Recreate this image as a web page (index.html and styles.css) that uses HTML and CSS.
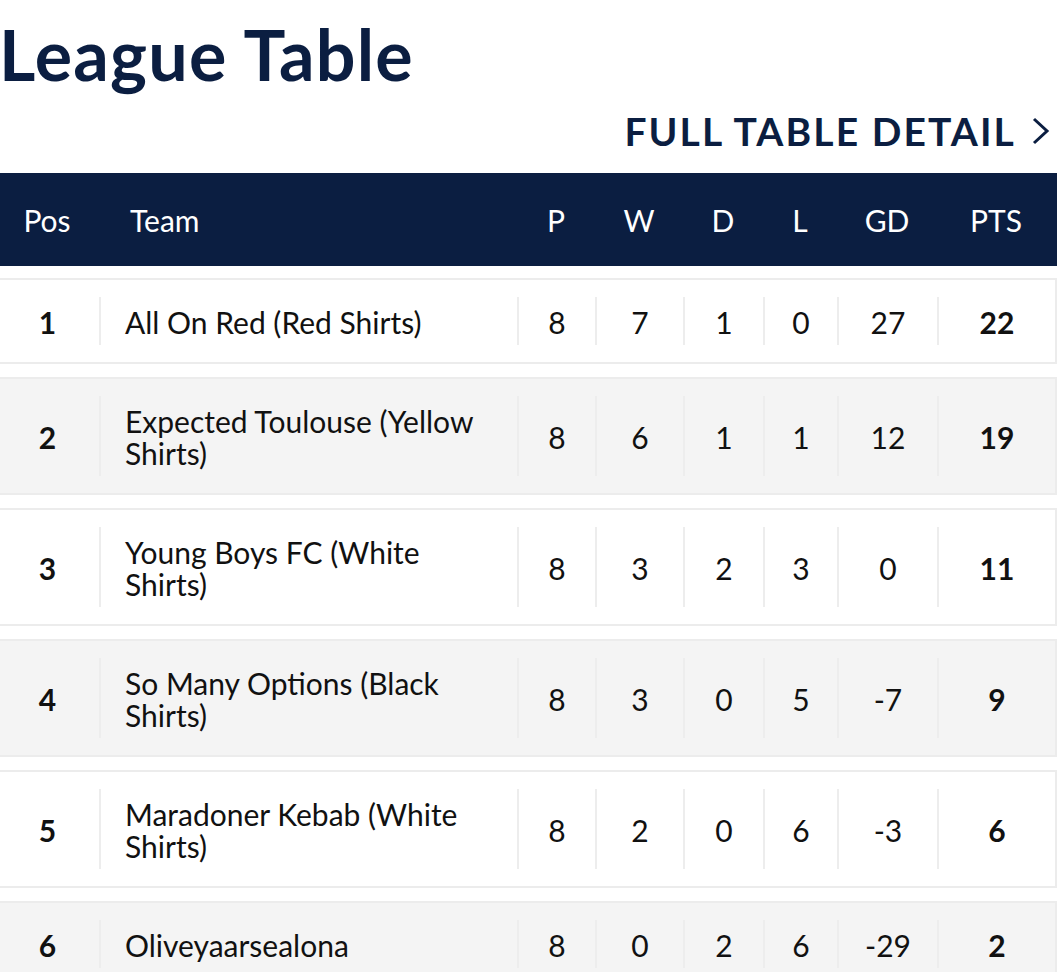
FILE: index.html
```html
<!DOCTYPE html>
<html lang="en">
<head>
<meta charset="utf-8">
<title>League Table</title>
<link rel="stylesheet" href="styles.css">
</head>
<body>
<main class="page">
  <h1 class="title">League Table</h1>
  <div class="more-row">
    <a class="more-link" href="#">FULL TABLE DETAIL
      <svg class="chevron" width="18" height="28" viewBox="0 0 18 28" aria-hidden="true"><polyline points="2,2 15,14 2,26" fill="none" stroke="currentColor" stroke-width="3"/></svg>
    </a>
  </div>
  <section class="table">
    <div class="head">
      <div class="hc pos">Pos</div>
      <div class="hc team">Team</div>
      <div class="hc">P</div>
      <div class="hc">W</div>
      <div class="hc">D</div>
      <div class="hc">L</div>
      <div class="hc">GD</div>
      <div class="hc">PTS</div>
    </div>

    <div class="row">
      <div class="c pos b">1</div>
      <div class="c team">All On Red (Red Shirts)</div>
      <div class="c">8</div><div class="c">7</div><div class="c">1</div><div class="c">0</div><div class="c">27</div><div class="c b">22</div>
    </div>
    <div class="row alt">
      <div class="c pos b">2</div>
      <div class="c team">Expected Toulouse (Yellow Shirts)</div>
      <div class="c">8</div><div class="c">6</div><div class="c">1</div><div class="c">1</div><div class="c">12</div><div class="c b">19</div>
    </div>
    <div class="row">
      <div class="c pos b">3</div>
      <div class="c team">Young Boys FC (White Shirts)</div>
      <div class="c">8</div><div class="c">3</div><div class="c">2</div><div class="c">3</div><div class="c">0</div><div class="c b">11</div>
    </div>
    <div class="row alt">
      <div class="c pos b">4</div>
      <div class="c team">So Many Options (Black Shirts)</div>
      <div class="c">8</div><div class="c">3</div><div class="c">0</div><div class="c">5</div><div class="c">-7</div><div class="c b">9</div>
    </div>
    <div class="row">
      <div class="c pos b">5</div>
      <div class="c team">Maradoner Kebab (White Shirts)</div>
      <div class="c">8</div><div class="c">2</div><div class="c">0</div><div class="c">6</div><div class="c">-3</div><div class="c b">6</div>
    </div>
    <div class="row alt">
      <div class="c pos b">6</div>
      <div class="c team">Oliveyaarsealona</div>
      <div class="c">8</div><div class="c">0</div><div class="c">2</div><div class="c">6</div><div class="c">-29</div><div class="c b">2</div>
    </div>
  </section>
</main>
</body>
</html>
```

FILE: styles.css
```css
* { box-sizing: border-box; }
html, body { margin: 0; padding: 0; background: #fff; }
body {
  font-family: Lato, "Noto Sans", "Liberation Sans", sans-serif;
  color: #111;
  overflow: hidden;
}
.page {
  width: 1060px;
  margin-left: -3px;
}
.title {
  margin: 0;
  padding: 12px 0 0 2px;
  font-size: 70px;
  line-height: 84px;
  font-weight: 700;
  color: #0b1e41;
  letter-spacing: 1.2px;
}
.more-row {
  display: flex;
  justify-content: flex-end;
  padding: 13px 7px 0 0;
  height: 77px;
}
.more-link {
  display: flex;
  align-items: center;
  gap: 16px;
  height: 44px;
  font-size: 39px;
  font-weight: 700;
  letter-spacing: 2.1px;
  color: #0b1e41;
  text-decoration: none;
}
.chevron { display: block; }

.head, .row {
  display: grid;
  grid-template-columns: 100px 418px 78px 88px 80px 74px 100px 1fr;
}
.head {
  background: #0b1e41;
  color: #fff;
  height: 93px;
  align-items: center;
  padding: 0 2px;
  margin-bottom: 12px;
}
.hc {
  font-size: 30px;
  text-align: center;
}
.hc.pos { padding-right: 4px; }
.hc.team { text-align: left; padding-left: 31px; }

.row {
  border: 2px solid #ececec;
  background: #fff;
  padding: 17px 0;
  margin-bottom: 13px;
  align-items: stretch;
}
.row.alt { background: #f4f4f4; }
.c {
  font-size: 30px;
  line-height: 32px;
  padding: 9px 0 7px;
  text-align: center;
  border-left: 2px solid #ededed;
  display: flex;
  align-items: center;
  justify-content: center;
}
.c.pos { border-left: none; padding-right: 3px; }
.c.team {
  justify-content: flex-start;
  text-align: left;
  padding-left: 24px;
  padding-right: 28px;
}
.b { font-weight: 700; }
```
